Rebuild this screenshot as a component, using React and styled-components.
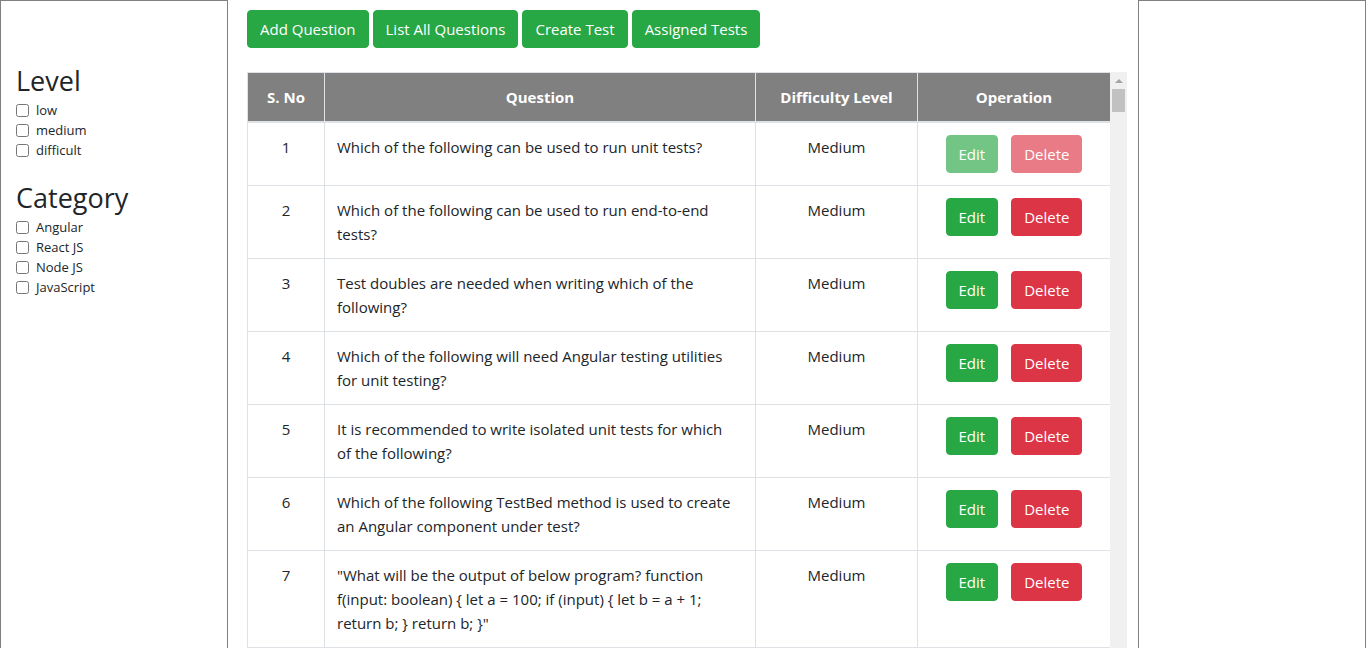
import React from 'react';
import styled, { createGlobalStyle } from 'styled-components';

const GlobalStyle = createGlobalStyle`
  html, body {
    margin: 0;
    padding: 0;
    overflow: hidden;
  }
  body {
    font-family: "Open Sans", "Segoe UI", Roboto, "Liberation Sans", sans-serif;
    font-size: 15px;
    line-height: 1.6;
    color: #212529;
    background: #fff;
  }
  *, *::before, *::after {
    box-sizing: border-box;
  }
`;

const Page = styled.div`
  display: grid;
  grid-template-columns: 228px 910px 228px;
  height: 100vh;
`;

const SidePanel = styled.aside`
  border: 1px solid #808080;
  border-bottom: none;
  padding: 63px 15px 0 15px;
`;

const FilterTitle = styled.h3`
  margin: ${(p) => (p.$first ? '0' : '21px')} 0 2px 0;
  font-size: 27px;
  font-weight: 500;
  line-height: 34px;
  color: #212529;
`;

const FilterOption = styled.label`
  display: flex;
  align-items: center;
  gap: 7px;
  height: 20px;
  font-size: 13px;
  color: #212529;

  input {
    margin: 0;
    width: 13px;
    height: 13px;
  }
`;

const Main = styled.main`
  padding: 10px 11px 0 19px;
`;

const NavBar = styled.nav`
  display: flex;
  gap: 4px;
  margin-bottom: 24px;
`;

const NavButton = styled.button`
  font-family: inherit;
  font-size: 15px;
  line-height: 24px;
  padding: 6px 12px;
  color: #fff;
  background: #28a745;
  border: 1px solid #28a745;
  border-radius: 4px;
  cursor: pointer;
`;

const TableFrame = styled.div`
  display: flex;
  width: 880px;
  height: 576px;
  overflow: hidden;
`;

const TableViewport = styled.div`
  flex: 1;
  overflow: hidden;
`;

const ScrollRail = styled.div`
  width: 17px;
  flex: none;
  background: #f0f0f0;
  display: flex;
  flex-direction: column;
  align-items: center;
`;

const ScrollArrow = styled.div`
  height: 17px;
  display: flex;
  align-items: center;
  justify-content: center;

  &::before {
    content: '';
    border-left: 4px solid transparent;
    border-right: 4px solid transparent;
    border-bottom: 4px solid #a3a3a3;
  }
`;

const ScrollThumb = styled.div`
  width: 13px;
  height: 23px;
  background: #c1c1c1;
`;

const Table = styled.table`
  width: 863px;
  table-layout: fixed;
  border-collapse: collapse;
  color: #212529;
`;

const HeadCell = styled.th`
  padding: 12px;
  background: #808080;
  color: #fff;
  font-weight: 700;
  line-height: 24px;
  text-align: center;
  border: 1px solid #dee2e6;
  border-bottom: 2px solid #dee2e6;
`;

const Cell = styled.td`
  padding: ${(p) => (p.$wide ? '12px 16px 12px 12px' : '12px')};
  line-height: 24px;
  vertical-align: top;
  text-align: ${(p) => (p.$wide ? 'left' : 'center')};
  border: 1px solid #dee2e6;
`;

const Actions = styled.div`
  display: flex;
  justify-content: center;
  gap: 13px;
`;

const ActionButton = styled.button`
  font-family: inherit;
  font-size: 15px;
  line-height: 24px;
  padding: 6px 12px;
  color: #fff;
  background: ${(p) => (p.$danger ? '#dc3545' : '#28a745')};
  border: 1px solid ${(p) => (p.$danger ? '#dc3545' : '#28a745')};
  border-radius: 4px;
  opacity: ${(p) => (p.disabled ? 0.65 : 1)};
  cursor: ${(p) => (p.disabled ? 'default' : 'pointer')};
`;

const levels = ['low', 'medium', 'difficult'];
const categories = ['Angular', 'React JS', 'Node JS', 'JavaScript'];
const menu = ['Add Question', 'List All Questions', 'Create Test', 'Assigned Tests'];

const questions = [
  'Which of the following can be used to run unit tests?',
  'Which of the following can be used to run end-to-end tests?',
  'Test doubles are needed when writing which of the following?',
  'Which of the following will need Angular testing utilities for unit testing?',
  'It is recommended to write isolated unit tests for which of the following?',
  'Which of the following TestBed method is used to create an Angular component under test?',
  '"What will be the output of below program? function f(input: boolean) { let a = 100; if (input) { let b = a + 1; return b; } return b; }"',
].map((text, i) => ({ id: i + 1, text, level: 'Medium' }));

function App() {
  return (
    <>
      <GlobalStyle />
      <Page>
        <SidePanel>
          <FilterTitle $first>Level</FilterTitle>
          {levels.map((l) => (
            <FilterOption key={l}>
              <input type="checkbox" />
              {l}
            </FilterOption>
          ))}
          <FilterTitle>Category</FilterTitle>
          {categories.map((c) => (
            <FilterOption key={c}>
              <input type="checkbox" />
              {c}
            </FilterOption>
          ))}
        </SidePanel>

        <Main>
          <NavBar>
            {menu.map((m) => (
              <NavButton key={m}>{m}</NavButton>
            ))}
          </NavBar>

          <TableFrame>
            <TableViewport>
              <Table>
                <colgroup>
                  <col style={{ width: 77 }} />
                  <col style={{ width: 431 }} />
                  <col style={{ width: 162 }} />
                  <col style={{ width: 193 }} />
                </colgroup>
                <thead>
                  <tr>
                    <HeadCell>S. No</HeadCell>
                    <HeadCell>Question</HeadCell>
                    <HeadCell>Difficulty Level</HeadCell>
                    <HeadCell>Operation</HeadCell>
                  </tr>
                </thead>
                <tbody>
                  {questions.map((q, idx) => (
                    <tr key={q.id}>
                      <Cell>{q.id}</Cell>
                      <Cell $wide>{q.text}</Cell>
                      <Cell>{q.level}</Cell>
                      <Cell>
                        <Actions>
                          <ActionButton disabled={idx === 0}>Edit</ActionButton>
                          <ActionButton $danger disabled={idx === 0}>Delete</ActionButton>
                        </Actions>
                      </Cell>
                    </tr>
                  ))}
                </tbody>
              </Table>
            </TableViewport>
            <ScrollRail>
              <ScrollArrow />
              <ScrollThumb />
            </ScrollRail>
          </TableFrame>
        </Main>

        <SidePanel />
      </Page>
    </>
  );
}

export default App;
